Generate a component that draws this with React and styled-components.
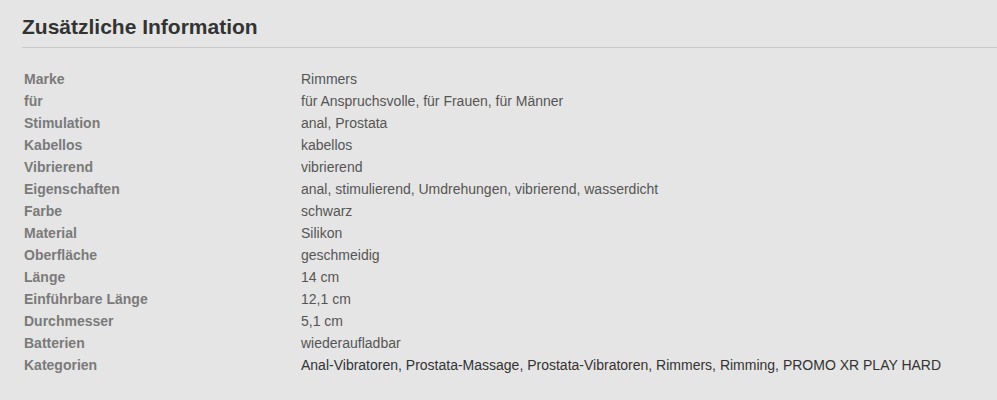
import React from 'react'
import styled, { createGlobalStyle } from 'styled-components'

const GlobalStyle = createGlobalStyle`
  html, body {
    margin: 0;
    padding: 0;
    background: #e5e5e5;
  }
  body {
    font-family: "Liberation Sans", Arial, sans-serif;
  }
`

const rows = [
  ['Marke', 'Rimmers'],
  ['für', 'für Anspruchsvolle, für Frauen, für Männer'],
  ['Stimulation', 'anal, Prostata'],
  ['Kabellos', 'kabellos'],
  ['Vibrierend', 'vibrierend'],
  ['Eigenschaften', 'anal, stimulierend, Umdrehungen, vibrierend, wasserdicht'],
  ['Farbe', 'schwarz'],
  ['Material', 'Silikon'],
  ['Oberfläche', 'geschmeidig'],
  ['Länge', '14 cm'],
  ['Einführbare Länge', '12,1 cm'],
  ['Durchmesser', '5,1 cm'],
  ['Batterien', 'wiederaufladbar'],
  ['Kategorien', 'Anal-Vibratoren, Prostata-Massage, Prostata-Vibratoren, Rimmers, Rimming, PROMO XR PLAY HARD', true],
]

const Section = styled.section`
  padding: 15px 0 0 22px;
`

const Title = styled.h2`
  margin: 0;
  padding-bottom: 8px;
  font-size: 21px;
  line-height: 24px;
  font-weight: bold;
  color: #333;
  border-bottom: 1px solid #c8c8c8;
`

const Table = styled.div`
  display: grid;
  grid-template-columns: 277px 1fr;
  margin-top: 20px;
  padding-left: 2px;
`

const Label = styled.div`
  font-size: 14px;
  line-height: 22px;
  font-weight: bold;
  color: #7a7a7a;
`

const Value = styled.div`
  font-size: 14px;
  line-height: 22px;
  color: ${p => (p.$link ? '#333' : '#555')};
`

export default function App() {
  return (
    <>
      <GlobalStyle />
      <Section>
        <Title>Zusätzliche Information</Title>
        <Table>
          {rows.map(([k, v, link]) => (
            <React.Fragment key={k}>
              <Label>{k}</Label>
              <Value $link={link}>{v}</Value>
            </React.Fragment>
          ))}
        </Table>
      </Section>
    </>
  )
}
